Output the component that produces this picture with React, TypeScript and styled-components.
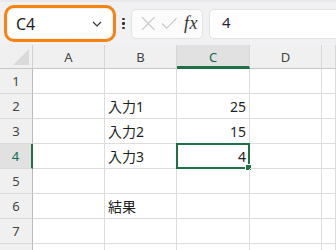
import React from "react";
import styled, { createGlobalStyle } from "styled-components";

const GlobalStyle = createGlobalStyle`
  html, body {
    margin: 0;
    padding: 0;
    background: #ffffff;
  }
  body {
    width: 336px;
    height: 250px;
    overflow: hidden;
    font-family: "Noto Sans", "Noto Sans CJK JP", sans-serif;
  }
`;

const columns = ["A", "B", "C", "D", ""];
const selectedCol = "C";
const selectedRow = 4;
const visibleRows = 7;

type CellData = { text: string; align?: "left" | "right" };

const data: Record<string, CellData> = {
  B2: { text: "入力1" },
  C2: { text: "25", align: "right" },
  B3: { text: "入力2" },
  C3: { text: "15", align: "right" },
  B4: { text: "入力3" },
  C4: { text: "4", align: "right" },
  B6: { text: "結果" },
};

const App = () => {
  // row 8 is only a sliver at the bottom edge, so its number is not drawn
  const rows = [1, 2, 3, 4, 5, 6, 7, 8];
  return (
    <Screen>
      <GlobalStyle />
      <Toolbar>
        <NameBoxRing>
          <NameBox>
            <NameText>C4</NameText>
            <svg width="10" height="6" viewBox="0 0 10 6">
              <polyline
                points="1,1 5,5 9,1"
                fill="none"
                stroke="#333"
                strokeWidth="1.2"
              />
            </svg>
          </NameBox>
        </NameBoxRing>
        <Dots>
          <span />
          <span />
          <span />
        </Dots>
        <ButtonGroup>
          <svg width="15" height="15" viewBox="0 0 15 15">
            <path d="M1 1 L14 14 M14 1 L1 14" stroke="#c4c4c4" strokeWidth="1.1" />
          </svg>
          <svg width="17" height="13" viewBox="0 0 17 13">
            <polyline
              points="1,6.5 6,11.5 16,1"
              fill="none"
              stroke="#c4c4c4"
              strokeWidth="1.1"
            />
          </svg>
          <Fx>fx</Fx>
        </ButtonGroup>
        <FormulaInput>4</FormulaInput>
      </Toolbar>

      <Grid>
        <Corner>
          <Triangle />
        </Corner>
        {columns.map((c, i) => (
          <ColHeader key={"h" + i} $active={c === selectedCol}>
            {c}
          </ColHeader>
        ))}
        {rows.map((r) => (
          <React.Fragment key={r}>
            <RowHeader $active={r === selectedRow}>
              {r <= visibleRows ? r : null}
            </RowHeader>
            {columns.map((c, i) => {
              const key = c + r;
              const cell = data[key];
              const selected = c === selectedCol && r === selectedRow;
              return (
                <Cell key={key + i} $align={cell?.align ?? "left"}>
                  {cell?.text}
                  {selected && (
                    <Selection>
                      <FillHandle />
                    </Selection>
                  )}
                </Cell>
              );
            })}
          </React.Fragment>
        ))}
      </Grid>
    </Screen>
  );
};

const Screen = styled.div`
  width: 336px;
  height: 250px;
  overflow: hidden;
  background: #fff;
`;

const Toolbar = styled.div`
  height: 45px;
  box-sizing: border-box;
  background: #f1f1f4;
  border-top: 2px solid #e9e9ec;
  display: flex;
  align-items: center;
  padding: 0 0 0 4px;
  white-space: nowrap;
`;

const NameBoxRing = styled.div`
  width: 112px;
  height: 37px;
  box-sizing: border-box;
  border: 3px solid #f7820e;
  border-radius: 10px;
  padding: 1px;
  flex-shrink: 0;
`;

const NameBox = styled.div`
  height: 100%;
  box-sizing: border-box;
  background: #fff;
  border-radius: 6px;
  display: flex;
  align-items: center;
  justify-content: space-between;
  padding: 0 10px 0 8px;
`;

const NameText = styled.span`
  font-size: 16px;
  color: #1f1f1f;
`;

const Dots = styled.div`
  width: 15px;
  display: flex;
  flex-direction: column;
  align-items: center;
  gap: 2px;
  flex-shrink: 0;
  span {
    width: 2.5px;
    height: 2.5px;
    background: #333;
    border-radius: 1px;
  }
`;

const ButtonGroup = styled.div`
  width: 72px;
  height: 30px;
  box-sizing: border-box;
  background: #fbfbfb;
  border: 1px solid #e2e2e2;
  border-radius: 5px;
  display: flex;
  align-items: center;
  padding: 0 4px 0 9px;
  gap: 5px;
  flex-shrink: 0;
`;

const Fx = styled.span`
  font-family: "Liberation Serif", "DejaVu Serif", serif;
  font-style: italic;
  font-size: 18px;
  color: #333;
  margin-left: 2px;
  letter-spacing: 0.5px;
`;

const FormulaInput = styled.div`
  margin-left: 6px;
  height: 30px;
  flex: 1;
  box-sizing: border-box;
  background: #fff;
  border: 1px solid #e2e2e2;
  border-right: none;
  border-radius: 5px 0 0 5px;
  padding: 0 0 3px 12px;
  display: flex;
  align-items: center;
  font-size: 15px;
  color: #2a1f3a;
`;

const Grid = styled.div`
  display: grid;
  grid-template-columns: 33px 72px 72px 73px 72px 1fr;
  grid-template-rows: 24px repeat(8, 25px);
`;

const Corner = styled.div`
  background: #f0f0f0;
  border-right: 1px solid #d0d0d0;
  border-bottom: 1px solid #c6c6c6;
  box-sizing: border-box;
  position: relative;
`;

const Triangle = styled.div`
  position: absolute;
  right: 3px;
  bottom: 3px;
  width: 0;
  height: 0;
  border-left: 16px solid transparent;
  border-bottom: 16px solid #dadada;
`;

const ColHeader = styled.div<{ $active: boolean }>`
  box-sizing: border-box;
  background: ${(p) => (p.$active ? "#e1e1e1" : "#f0f0f0")};
  border-right: 1px solid #d6d6d6;
  border-bottom: ${(p) => (p.$active ? "3px solid #1e7145" : "1px solid #c6c6c6")};
  display: flex;
  align-items: center;
  justify-content: center;
  padding-top: ${(p) => (p.$active ? "2px" : "0")};
  font-size: 13px;
  color: ${(p) => (p.$active ? "#0f6b55" : "#444")};
`;

const RowHeader = styled.div<{ $active: boolean }>`
  box-sizing: border-box;
  background: ${(p) => (p.$active ? "#e1e1e1" : "#f0f0f0")};
  border-right: ${(p) => (p.$active ? "2px solid #1e7145" : "1px solid #bcbcbc")};
  border-bottom: 1px solid #dadada;
  display: flex;
  align-items: center;
  justify-content: center;
  font-size: 13px;
  color: ${(p) => (p.$active ? "#0f6b55" : "#444")};
`;

const Cell = styled.div<{ $align: "left" | "right" }>`
  position: relative;
  box-sizing: border-box;
  border-right: 1px solid #dcdcdc;
  border-bottom: 1px solid #dcdcdc;
  display: flex;
  align-items: center;
  justify-content: ${(p) => (p.$align === "right" ? "flex-end" : "flex-start")};
  padding: 0 3px 0 3px;
  font-size: 14px;
  color: #1f1f1f;
  white-space: nowrap;
`;

const Selection = styled.div`
  position: absolute;
  left: -1px;
  top: -1px;
  right: -1px;
  bottom: -1px;
  border: 2px solid #1e7145;
  pointer-events: none;
`;

const FillHandle = styled.div`
  position: absolute;
  right: -4px;
  bottom: -4px;
  width: 5px;
  height: 5px;
  background: #1e7145;
  border: 1px solid #fff;
`;

export default App;
